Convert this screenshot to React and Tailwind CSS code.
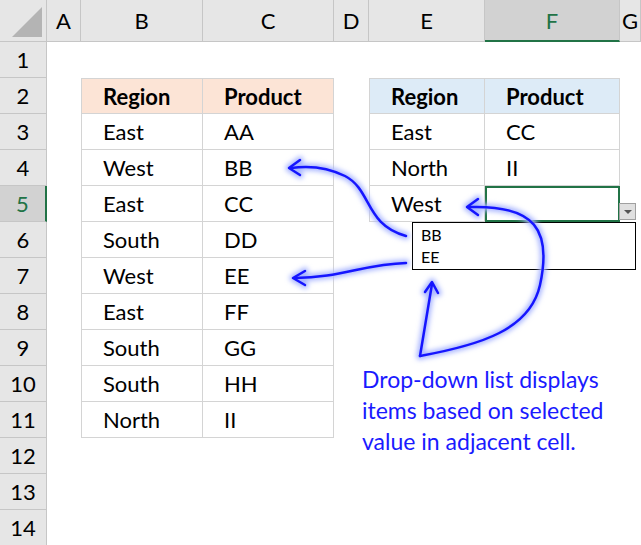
import React from "react";

const cols = ["A","B","C","D","E","F","G"];
const left = [["Region","Product"],["East","AA"],["West","BB"],["East","CC"],["South","DD"],["West","EE"],["East","FF"],["South","GG"],["South","HH"],["North","II"]];
const right = [["Region","Product"],["East","CC"],["North","II"],["West",""]];

export default function App() {
  const cells = [];
  for (let r = 1; r <= 14; r++) {
    cells.push(
      <div key={"h"+r} className={`flex items-center justify-center border-b border-r border-[#c6c6c6] ${r===5?"bg-[#d2d2d2] text-[#217346] border-r-2 border-r-[#217346]":"bg-[#e6e6e6] text-black"}`}>{r}</div>
    );
    for (let c = 0; c < 7; c++) {
      let content = null, cls = "";
      const li = r - 2, ri = r - 2;
      if ((c === 1 || c === 2) && li >= 0 && li < left.length) {
        content = left[li][c-1];
        cls = `border-b border-[#d4d4d4] ${c===1?"border-l border-r":"border-r"} ${li===0?"bg-[#fce4d6] font-bold border-t":""}`;
      }
      if ((c === 4 || c === 5) && ri >= 0 && ri < right.length) {
        content = right[ri][c-4];
        cls = `border-b border-[#d4d4d4] ${c===4?"border-l border-r":"border-r"} ${ri===0?"bg-[#ddebf7] font-bold border-t":""}`;
        if (r === 5 && c === 5) cls = "border-2 border-[#217346]";
      }
      cells.push(<div key={r+"-"+c} className={`flex items-center pl-[21px] ${cls}`}>{content}</div>);
    }
  }
  return (
    <div className="relative w-[641px] h-[545px] overflow-hidden bg-white text-[22px] text-black" style={{fontFamily:"Lato, 'Open Sans', sans-serif"}}>
      <div className="grid grid-cols-[47px_34px_122px_131px_35px_116px_135px_1fr] grid-rows-[42px_repeat(14,36px)]">
        <div className="bg-[#e6e6e6] border-b border-r border-[#c6c6c6] relative">
          <div className="absolute right-[4px] bottom-[4px] w-0 h-0 border-l-[30px] border-l-transparent border-b-[30px] border-b-[#b4b4b4]"></div>
        </div>
        {cols.map((c) => (
          <div key={c} className={`flex items-center justify-center border-r border-[#c6c6c6] ${c==="F"?"bg-[#d2d2d2] text-[#217346] border-b-2 border-b-[#217346]":"bg-[#e6e6e6] border-b"}`}>{c}</div>
        ))}
        {cells}
      </div>
      <div className="absolute left-[619px] top-[203px] w-[17px] h-[17px] bg-[#e0e0e0] border border-[#a0a0a0] flex items-center justify-center">
        <div className="w-0 h-0 border-l-[4px] border-r-[4px] border-t-[4px] border-l-transparent border-r-transparent border-t-[#555]"></div>
      </div>
      <div className="absolute left-[412px] top-[222px] w-[224px] h-[48px] bg-white border border-black text-[16px] leading-[22px] pl-[8px] pt-[1px]">
        <div>BB</div><div>EE</div>
      </div>
      <svg className="absolute left-0 top-0" width="641" height="545">
        <defs>
          <filter id="g"><feGaussianBlur stdDeviation="2.5" /></filter>
        </defs>
        {[0,1].map((k) => (
          <g key={k} stroke={k===0?"#a9b6ff":"#1515ff"} strokeWidth={k===0?7:2.5} fill="none" strokeLinecap="round" strokeLinejoin="round" filter={k===0?"url(#g)":undefined}>
            <path d="M406 236 C365 225 372 190 345 176 C325 166 305 166 291 168" />
            <path d="M300 160 L289 168 L300 175" />
            <path d="M406 263 C365 264 340 278 295 278" />
            <path d="M305 271 L293 278 L305 285" />
            <path d="M420 356 L432 284" />
            <path d="M425 292 L432 282 L438 293" />
            <path d="M420 356 C480 345 530 330 540 285 C552 230 535 205 470 207" />
            <path d="M478 199 L467 207 L478 215" />
          </g>
        ))}
      </svg>
      <div className="absolute left-[362px] top-[364px] text-[#1a1aff] text-[23px] leading-[31px] whitespace-nowrap">
        <div>Drop-down list displays</div>
        <div>items based on selected</div>
        <div>value in adjacent cell.</div>
      </div>
    </div>
  );
}
